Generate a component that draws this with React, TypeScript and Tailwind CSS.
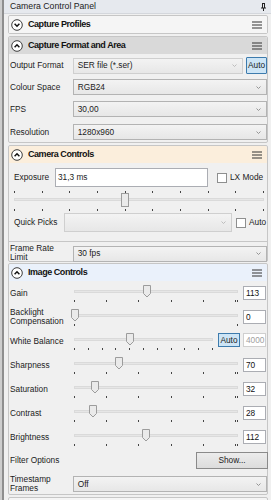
import React from "react";

const Chevron = ({ up }: { up: boolean }) => (
  <svg width="12" height="12" viewBox="0 0 12 12" className="shrink-0">
    <circle cx="6" cy="6" r="5.3" fill="#ffffff" stroke="#3c3c3c" strokeWidth="1" />
    <path
      d={up ? "M3.6 7.2 L6 4.8 L8.4 7.2" : "M3.6 4.8 L6 7.2 L8.4 4.8"}
      fill="none"
      stroke="#111111"
      strokeWidth="1.5"
    />
  </svg>
);

const Hamburger = () => (
  <svg width="10" height="8" viewBox="0 0 10 8" className="shrink-0">
    <path d="M0 1h10M0 4h10M0 7h10" stroke="#333333" strokeWidth="1.1" />
  </svg>
);

const Header = ({ title, up, bg }: { title: string; up: boolean; bg: string }) => (
  <div className={`flex items-center h-[17px] pl-[2px] pr-[5px] rounded-t-[2px] ${bg}`}>
    <Chevron up={up} />
    <span className="ml-[5px] font-bold text-[9px] tracking-[-0.45px] text-[#111]">{title}</span>
    <span className="flex-1" />
    <Hamburger />
  </div>
);

const Arrow = ({ light }: { light?: boolean }) => (
  <svg width="5" height="3" viewBox="0 0 5 3" className="shrink-0">
    <path d="M0.5 0.5 L2.5 2.5 L4.5 0.5" stroke={light ? "#b8b8b8" : "#8a8a8a"} fill="none" strokeWidth="0.9" />
  </svg>
);

const Select = ({ value, className, light }: { value: string; className: string; light?: boolean }) => (
  <div
    className={`flex items-center justify-between border ${light ? "border-[#cfcfcf]" : "border-[#b3b3b3]"} bg-gradient-to-b from-[#f3f3f3] to-[#e7e7e7] pl-[4px] pr-[5px] ${className}`}
  >
    <span>{value}</span>
    <Arrow light={light} />
  </div>
);

const Checkbox = () => <div className="w-[10px] h-[10px] border border-[#8e8f8f] bg-white shrink-0" />;

const DownThumb = ({ left }: { left: number }) => (
  <svg width="8" height="13" viewBox="0 0 8 13" className="absolute top-0" style={{ left: left }}>
    <path d="M0.5 0.5 H7.5 V8.5 L4 12 L0.5 8.5 Z" fill="#eaeaea" stroke="#9c9c9c" strokeWidth="1" />
  </svg>
);

const Ticks = ({ n, double }: { n: number; double?: boolean }) => (
  <div className="flex justify-between">
    {Array.from({ length: n }).map((_, i) => (
      <div key={i} className="flex gap-[1px]">
        <div className="w-[1px] h-[2px] bg-[#444]" />
        {double && i === n - 1 ? <div className="w-[1px] h-[2px] bg-[#444]" /> : null}
      </div>
    ))}
  </div>
);

const Slider = ({
  thumb,
  ticks,
  width,
  endsOnly,
}: {
  thumb: number;
  ticks: number;
  width: number;
  endsOnly?: boolean;
}) => (
  <div className="relative h-[20px] shrink-0" style={{ width }}>
    <div className="absolute left-[2px] right-[2px] top-[5px] h-[3px] bg-[#e6e6e6] border border-[#dadada]" />
    <DownThumb left={thumb} />
    <div className="absolute left-[2px] right-[2px] top-[15px]">
      {endsOnly ? (
        <div className="flex justify-between">
          <div className="w-[1px] h-[2px] bg-[#444]" />
          <div className="w-[1px] h-[2px] bg-[#444]" />
        </div>
      ) : (
        <Ticks n={ticks} double={ticks === 6} />
      )}
    </div>
  </div>
);

const ValueBox = ({ v, disabled }: { v: string; disabled?: boolean }) => (
  <div
    className={`w-[23px] h-[14px] border ${disabled ? "border-[#cfcfcf] text-[#a0a0a0]" : "border-[#abadb3] text-[#111]"} bg-white pl-[2px] flex items-center`}
  >
    {v}
  </div>
);

const ImgRow = ({
  label,
  thumb,
  value,
  two,
  endsOnly,
}: {
  label: string[];
  thumb: number;
  value: string;
  two?: boolean;
  endsOnly?: boolean;
}) => (
  <div className="flex items-start h-[24px]">
    <div className={`w-[62px] leading-[9px] ${two ? "-mt-[1px]" : "mt-[4px]"}`}>
      {label.map((l) => (
        <div key={l}>{l}</div>
      ))}
    </div>
    <div>
      <Slider thumb={thumb} ticks={6} width={168} endsOnly={endsOnly} />
    </div>
    <div className="ml-[3px] mt-[1px]">
      <ValueBox v={value} />
    </div>
  </div>
);

export default function App() {
  return (
    <div className="w-[271px] h-[500px] bg-[#f0f0f0] flex overflow-hidden font-['Liberation_Sans',Arial,sans-serif] text-[8.3px] text-[#1b1b1b] leading-none">
      <div className="w-[2px] bg-[#cdcdcd] shrink-0" />
      <div className="w-[2px] bg-[#8e8e8e] shrink-0" />
      <div className="flex-1 flex flex-col min-w-0">
        {/* title */}
        <div className="h-[14px] bg-[#e6e9ee] border-b border-[#d4d7dc] flex items-center pl-[6px] pr-[5px] shrink-0">
          <span className="text-[8.7px] text-[#222]">Camera Control Panel</span>
          <span className="flex-1" />
          <svg width="5" height="8" viewBox="0 0 5 8">
            <path d="M1 0.5 H4 M1.5 0.5 V5 M3.5 0.5 V5 M0 5 H5 M2.5 5 V8" stroke="#222" strokeWidth="1" fill="none" />
          </svg>
        </div>

        <div className="pl-[4px] pr-[3px] flex flex-col">
          {/* Capture Profiles */}
          <div className="mt-[1px] border border-[#c6c6c6] rounded-[2px] bg-[#f5f5f5]">
            <Header title="Capture Profiles" up={false} bg="bg-[#f5f5f5]" />
          </div>

          {/* Capture Format and Area */}
          <div className="mt-[2px] border border-[#c6c6c6] rounded-[2px] h-[107px]">
            <Header title="Capture Format and Area" up={true} bg="bg-[#d9d9d9]" />
            <div className="flex items-center mt-[3px] pl-[1px]">
              <span className="w-[63px]">Output Format</span>
              <Select value="SER file (*.ser)" className="w-[171px] h-[16px]" light />
              <div className="ml-[3px] w-[21px] h-[17px] border border-[#3d7bad] bg-[#cde5f6] rounded-[1px] flex items-center justify-center">
                Auto
              </div>
            </div>
            <div className="flex items-center mt-[5px] pl-[1px]">
              <span className="w-[63px]">Colour Space</span>
              <Select value="RGB24" className="w-[195px] h-[16px]" />
            </div>
            <div className="flex items-center mt-[6px] pl-[1px]">
              <span className="w-[63px]">FPS</span>
              <Select value="30,00" className="w-[195px] h-[16px]" />
            </div>
            <div className="flex items-center mt-[7px] pl-[1px]">
              <span className="w-[63px]">Resolution</span>
              <Select value="1280x960" className="w-[195px] h-[16px]" />
            </div>
          </div>

          {/* Camera Controls */}
          <div className="mt-[2px] border border-[#c6c6c6] rounded-[2px] h-[117px]">
            <Header title="Camera Controls" up={true} bg="bg-[#fbeedc]" />
            <div className="border-b border-[#c6c6c6] h-[74px] pl-[5px]">
              <div className="flex items-center mt-[5px]">
                <span className="w-[41px]">Exposure</span>
                <div className="w-[153px] h-[19px] bg-white border border-[#abadb3] flex items-center pl-[2px]">31,3 ms</div>
                <div className="ml-[9px]">
                  <Checkbox />
                </div>
                <span className="ml-[3px]">LX Mode</span>
              </div>
              <div className="relative w-[250px] h-[21px] mt-[4px]">
                <div className="absolute left-0 right-0 top-0">
                  <Ticks n={10} />
                </div>
                <div className="absolute left-0 right-0 top-[7px] h-[3px] bg-[#e6e6e6] border border-[#dadada]" />
                <div className="absolute left-[107px] top-[2px] w-[8px] h-[14px] bg-[#eaeaea] border border-[#9c9c9c]" />
                <div className="absolute left-0 right-0 top-[18px]">
                  <Ticks n={10} />
                </div>
              </div>
              <div className="flex items-center mt-[1px]">
                <span className="w-[50px]">Quick Picks</span>
                <Select value="" className="w-[168px] h-[19px]" light />
                <div className="ml-[4px]">
                  <Checkbox />
                </div>
                <span className="ml-[3px]">Auto</span>
              </div>
            </div>
            <div className="flex items-center mt-[3px] pl-[1px]">
              <div className="w-[63px] leading-[9px] -mt-[1px]">
                <div>Frame Rate</div>
                <div>Limit</div>
              </div>
              <Select value="30 fps" className="w-[195px] h-[16px]" />
            </div>
          </div>

          {/* Image Controls */}
          <div className="mt-[1px] border border-[#c6c6c6] rounded-[2px] h-[232px]">
            <Header title="Image Controls" up={true} bg="bg-[#eaf1fb]" />
            <div className="pl-[1px] mt-[4px]">
              <ImgRow label={["Gain"]} thumb={71} value="113" />
              <ImgRow label={["Backlight", "Compensation"]} thumb={-1} value="0" two endsOnly />
              <div className="flex items-start h-[24px]">
                <div className="w-[62px] mt-[4px]">White Balance</div>
                <div className="relative h-[20px] w-[143px] shrink-0">
                  <div className="absolute left-[2px] right-[2px] top-[5px] h-[3px] bg-[#e6e6e6] border border-[#dadada]" />
                  <DownThumb left={54} />
                  <div className="absolute left-[2px] right-[2px] top-[15px]">
                    <Ticks n={11} />
                  </div>
                </div>
                <div className="ml-[3px] w-[22px] h-[14px] border border-[#3d7bad] bg-[#cde5f6] flex items-center justify-center">
                  Auto
                </div>
                <div className="ml-[3px]">
                  <ValueBox v="4000" disabled />
                </div>
              </div>
              <ImgRow label={["Sharpness"]} thumb={43} value="70" />
              <ImgRow label={["Saturation"]} thumb={19} value="32" />
              <ImgRow label={["Contrast"]} thumb={17} value="28" />
              <ImgRow label={["Brightness"]} thumb={70} value="112" />
              <div className="flex items-center h-[18px] -mt-[2px]">
                <span className="w-[62px]">Filter Options</span>
                <span className="flex-1" />
                <div className="w-[72px] h-[17px] mr-[-1px] border border-[#8a8a8a] bg-gradient-to-b from-[#ececec] to-[#dcdcdc] flex items-center justify-center">
                  Show...
                </div>
              </div>
              <div className="flex items-center mt-[6px]">
                <div className="w-[63px] leading-[9px]">
                  <div>Timestamp</div>
                  <div>Frames</div>
                </div>
                <Select value="Off" className="w-[195px] h-[16px]" />
              </div>
            </div>
          </div>

          {/* next box */}
          <div className="mt-[2px] border border-[#c6c6c6] rounded-[2px] h-[20px] bg-[#f5f5f5]" />
        </div>
      </div>
    </div>
  );
}
